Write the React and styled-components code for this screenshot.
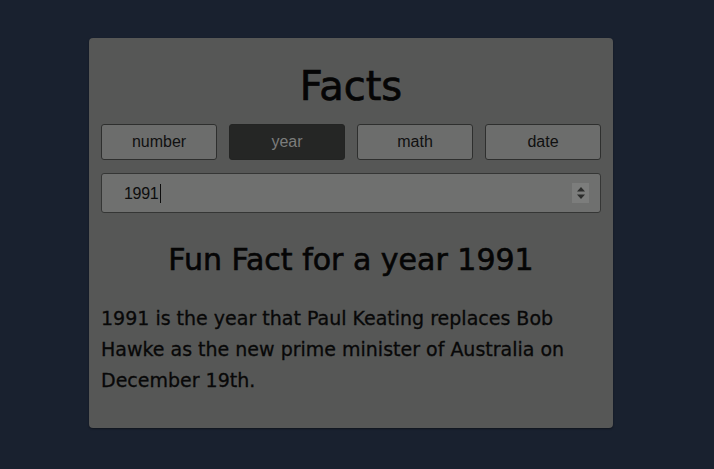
import React, { useState } from 'react'
import styled, { createGlobalStyle } from 'styled-components'

const GlobalStyle = createGlobalStyle`
  html, body {
    margin: 0;
    padding: 0;
    background: #19212f;
    height: 100%;
  }
`

const categories = ['number', 'year', 'math', 'date']

export default function App() {
  const [active, setActive] = useState('year')
  const [value, setValue] = useState('1991')

  return (
    <Page>
      <GlobalStyle />
      <Card>
        <Title>Facts</Title>
        <Tabs>
          {categories.map((item) => (
            <Tab key={item} $active={active === item} onClick={() => setActive(item)}>
              {item}
            </Tab>
          ))}
        </Tabs>
        <Field>
          <Input value={value} onChange={(e) => setValue(e.target.value)} />
          <Caret />
          <Spinner>
            <svg width="10" height="14" viewBox="0 0 10 14">
              <path d="M5 1 L9 5.5 H1 Z" fill="#2b2c2b" />
              <path d="M5 13 L9 8.5 H1 Z" fill="#2b2c2b" />
            </svg>
          </Spinner>
        </Field>
        <Subtitle>Fun Fact for a {active} {value}</Subtitle>
        <Text>
          1991 is the year that Paul Keating replaces Bob Hawke as the new prime minister of Australia on December 19th.
        </Text>
      </Card>
    </Page>
  )
}

const Page = styled.div`
  display: flex;
  justify-content: center;
  padding-top: 38px;
  padding-right: 12px;
  font-family: "DejaVu Sans", sans-serif;
`

const Card = styled.div`
  width: 524px;
  box-sizing: border-box;
  padding: 12px 12px 32px;
  background: #565756;
  border-radius: 4px;
  box-shadow: 0 1px 2px rgba(0, 0, 0, 0.4);
`

const Title = styled.h1`
  margin: 13px 0 15px;
  text-align: center;
  font-size: 40px;
  font-weight: normal;
  line-height: 46px;
  color: #050505;
  -webkit-text-stroke: 0.7px #050505;
`

const Tabs = styled.div`
  display: grid;
  grid-template-columns: repeat(4, 1fr);
  gap: 12px;
`

const Tab = styled.button`
  box-sizing: border-box;
  height: 36px;
  border: 1px solid ${(p) => (p.$active ? '#232423' : '#2e2f2e')};
  border-radius: 3px;
  background: ${(p) => (p.$active ? '#252625' : '#6c6d6c')};
  color: ${(p) => (p.$active ? '#7c7d7c' : '#101010')};
  font-family: "Liberation Sans", Arial, sans-serif;
  font-size: 16px;
  cursor: pointer;
`

const Field = styled.div`
  position: relative;
  margin-top: 13px;
  height: 40px;
  display: flex;
  align-items: center;
  background: #6f706f;
  border: 1px solid #353635;
  border-radius: 3px;
  box-sizing: border-box;
`

const Input = styled.input`
  border: none;
  outline: none;
  background: transparent;
  padding: 1px 0 0 22px;
  width: 70px;
  font-family: "Liberation Sans", Arial, sans-serif;
  font-size: 16px;
  color: #0d0d0d;
  letter-spacing: -0.3px;
`

const Caret = styled.span`
  position: absolute;
  left: 58px;
  top: 10px;
  width: 1px;
  height: 19px;
  background: #0d0d0d;
`

const Spinner = styled.span`
  margin-left: auto;
  margin-right: 11px;
  width: 17px;
  height: 20px;
  background: #7c7d7c;
  display: flex;
  align-items: center;
  justify-content: center;
`

const Subtitle = styled.h2`
  margin: 28px 0 0;
  text-align: center;
  font-size: 30px;
  font-weight: normal;
  line-height: 38px;
  color: #050505;
  -webkit-text-stroke: 0.6px #050505;
`

const Text = styled.p`
  margin: 24px 0 0;
  font-size: 19px;
  line-height: 31px;
  color: #080808;
  -webkit-text-stroke: 0.3px #080808;
`
